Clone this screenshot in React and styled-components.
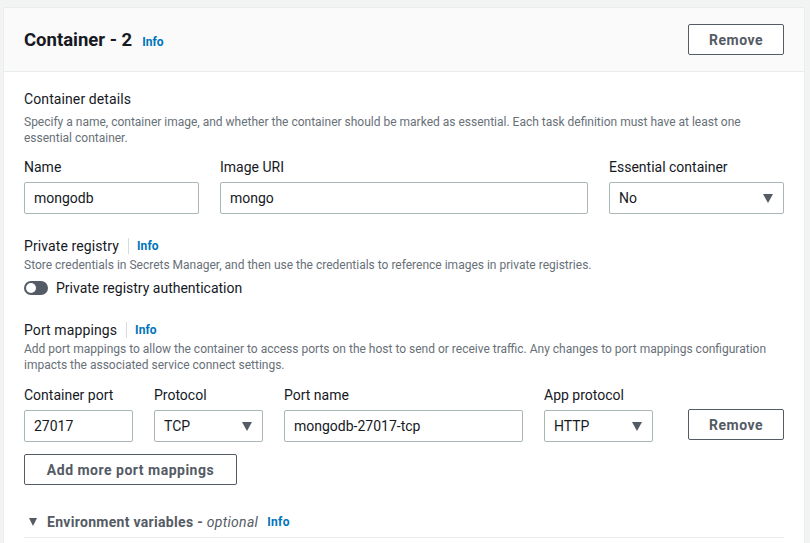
import React, { useState } from 'react'
import styled, { createGlobalStyle } from 'styled-components'

const GlobalStyle = createGlobalStyle`
    html, body {
        margin: 0;
        padding: 0;
        background: #f2f3f3;
        font-family: Roboto, "Liberation Sans", sans-serif;
        color: #16191f;
    }
`;

const Page = styled.div`
    width: 810px;
    height: 543px;
    overflow: hidden;
    padding: 7px 5px 0 3px;
    box-sizing: border-box;
`;

const Panel = styled.section`
    background: #fff;
    border: 1px solid #eaeded;
    border-bottom: none;
    height: 100%;
    box-sizing: border-box;
`;

const PanelHeader = styled.header`
    display: flex;
    align-items: center;
    justify-content: space-between;
    height: 63px;
    padding: 0 20px 0 20px;
    background: #fafafa;
    border-bottom: 1px solid #eaeded;
`;

const Title = styled.h2`
    margin: 0;
    font-size: 18.5px;
    font-weight: 700;
    display: flex;
    align-items: baseline;
    gap: 10px;
`;

const InfoLink = styled.a`
    font-size: 12px;
    font-weight: 700;
    color: #0073bb;
    text-decoration: none;
`;

const Button = styled.button`
    font-family: inherit;
    font-size: 14px;
    font-weight: 700;
    letter-spacing: 0.5px;
    color: #545b64;
    background: #fff;
    border: 1px solid #545b64;
    border-radius: 2px;
    height: 31px;
    padding: 0;
    width: ${(p) => p.width || 'auto'};
    flex-shrink: 0;
    cursor: pointer;
`;

const Body = styled.div`
    padding: 17px 20px 0 20px;
`;

const Section = styled.div`
    margin-bottom: ${(p) => p.gap || '0'};
`;

const Heading = styled.div`
    display: flex;
    align-items: center;
    font-size: 14px;
    line-height: 20px;
    letter-spacing: 0.1px;
    color: #16191f;
`;

const Divider = styled.span`
    width: 1px;
    height: 16px;
    background: #d5dbdb;
    margin: 0 8px 0 9px;
`;

const Description = styled.p`
    margin: ${(p) => p.top || '1px'} 0 0 0;
    font-size: 12px;
    line-height: 16px;
    color: #687078;
`;

const Row = styled.div`
    display: flex;
    align-items: flex-end;
    gap: 21px;
    margin-top: ${(p) => p.top || '0'};
`;

const Field = styled.label`
    display: flex;
    flex-direction: column;
    width: ${(p) => p.width || 'auto'};
    flex: ${(p) => (p.grow ? 1 : 'none')};
`;

const FieldLabel = styled.span`
    font-size: 14px;
    line-height: 20px;
    margin-bottom: 5px;
    color: #16191f;
`;

const Input = styled.div`
    height: 32px;
    box-sizing: border-box;
    border: 1px solid #aab7b8;
    border-radius: 2px;
    padding: 0 9px;
    display: flex;
    align-items: center;
    justify-content: space-between;
    font-size: 14px;
    color: #16191f;
    background: #fff;
`;

const Caret = styled.span`
    width: 0;
    height: 0;
    border-left: 5px solid transparent;
    border-right: 5px solid transparent;
    border-top: 9px solid #545b64;
    margin-right: 1px;
`;

const ToggleRow = styled.div`
    display: flex;
    align-items: center;
    gap: 8px;
    height: 20px;
    margin-top: 5px;
    font-size: 14px;
    color: #16191f;
`;

const Track = styled.span`
    width: 24px;
    height: 14px;
    border-radius: 7px;
    background: #545b64;
    display: flex;
    align-items: center;
    padding: 0 2px;
    box-sizing: border-box;
    justify-content: ${(p) => (p.on ? 'flex-end' : 'flex-start')};
`;

const Knob = styled.span`
    width: 10px;
    height: 10px;
    border-radius: 50%;
    background: #fff;
`;

const RemoveSlot = styled.div`
    margin-left: 14px;
    margin-bottom: 2px;
`;

const Expander = styled.div`
    display: flex;
    align-items: center;
    gap: 9px;
    height: 20px;
    margin-top: 27px;
    padding: 0 0 5px 5px;
    border-bottom: 1px solid #eaeded;
    font-size: 14px;
    font-weight: 700;
    letter-spacing: 0.3px;
    color: #545b64;

    em {
        font-weight: 400;
    }
`;

const ExpanderCaret = styled.span`
    width: 0;
    height: 0;
    border-left: 4px solid transparent;
    border-right: 4px solid transparent;
    border-top: 8px solid #545b64;
    margin-right: 1px;
`;

const Select = ({ value }) => (
    <Input>
        {value}
        <Caret />
    </Input>
);

const App = () => {
    const [privateAuth, setPrivateAuth] = useState(false);

    return (
        <Page>
            <GlobalStyle />
            <Panel>
                <PanelHeader>
                    <Title>
                        Container - 2 <InfoLink>Info</InfoLink>
                    </Title>
                    <Button width="96px">Remove</Button>
                </PanelHeader>
                <Body>
                    <Section gap="22px">
                        <Heading>Container details</Heading>
                        <Description top="5px">
                            Specify a name, container image, and whether the container should be marked as essential. Each task definition must have at least one essential container.
                        </Description>
                        <Row top="11px">
                            <Field width="175px">
                                <FieldLabel>Name</FieldLabel>
                                <Input>mongodb</Input>
                            </Field>
                            <Field grow>
                                <FieldLabel>Image URI</FieldLabel>
                                <Input>mongo</Input>
                            </Field>
                            <Field width="175px">
                                <FieldLabel>Essential container</FieldLabel>
                                <Select value="No" />
                            </Field>
                        </Row>
                    </Section>
                    <Section gap="22px">
                        <Heading>
                            Private registry <Divider /> <InfoLink>Info</InfoLink>
                        </Heading>
                        <Description>
                            Store credentials in Secrets Manager, and then use the credentials to reference images in private registries.
                        </Description>
                        <ToggleRow onClick={() => setPrivateAuth(!privateAuth)}>
                            <Track on={privateAuth ? 1 : 0}>
                                <Knob />
                            </Track>
                            Private registry authentication
                        </ToggleRow>
                    </Section>
                    <Section>
                        <Heading>
                            Port mappings <Divider /> <InfoLink>Info</InfoLink>
                        </Heading>
                        <Description>
                            Add port mappings to allow the container to access ports on the host to send or receive traffic. Any changes to port mappings configuration impacts the associated service connect settings.
                        </Description>
                        <Row top="12px">
                            <Field width="109px">
                                <FieldLabel>Container port</FieldLabel>
                                <Input>27017</Input>
                            </Field>
                            <Field width="109px">
                                <FieldLabel>Protocol</FieldLabel>
                                <Select value="TCP" />
                            </Field>
                            <Field width="239px">
                                <FieldLabel>Port name</FieldLabel>
                                <Input>mongodb-27017-tcp</Input>
                            </Field>
                            <Field width="109px">
                                <FieldLabel>App protocol</FieldLabel>
                                <Select value="HTTP" />
                            </Field>
                            <RemoveSlot>
                                <Button width="96px">Remove</Button>
                            </RemoveSlot>
                        </Row>
                        <Row top="12px">
                            <Button width="213px">Add more port mappings</Button>
                        </Row>
                    </Section>
                    <Expander>
                        <ExpanderCaret />
                        <span>
                            Environment variables - <em>optional</em>
                        </span>
                        <InfoLink>Info</InfoLink>
                    </Expander>
                </Body>
            </Panel>
        </Page>
    );
}

export default App;
